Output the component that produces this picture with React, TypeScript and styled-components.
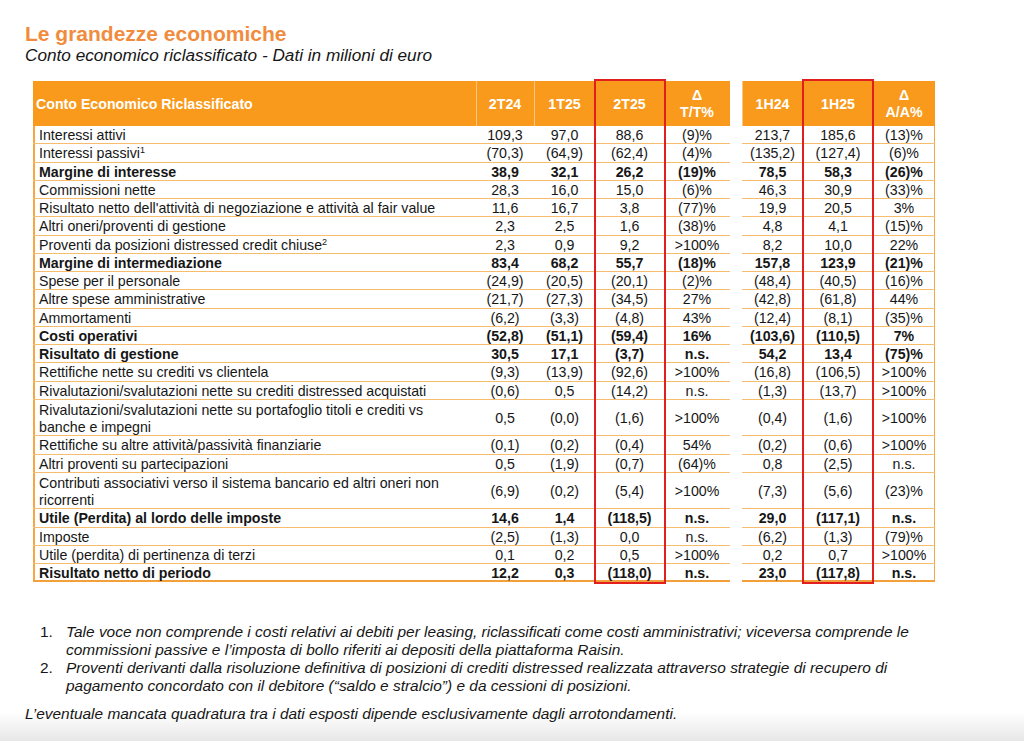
import React from "react";
import styled, { createGlobalStyle } from "styled-components";

const GlobalStyle = createGlobalStyle`
  html, body { margin: 0; padding: 0; }
  body {
    background: #fff;
    font-family: "Liberation Sans", Arial, sans-serif;
    color: #161616;
  }
`;

const ORANGE = "#f99a1c";
const LINE = "#f6bd6e";
const RED = "#e11f1f";

const Page = styled.div`
  width: 1024px;
  height: 741px;
  box-sizing: border-box;
  padding: 22px 0 0 25px;
  overflow: hidden;
  background: linear-gradient(to bottom, #fff 0, #fff 712px, #e7e7e7 741px);
`;

const Title = styled.h1`
  margin: 0;
  font-size: 21px;
  line-height: 24px;
  font-weight: 700;
  color: #f18b3e;
`;

const Subtitle = styled.h2`
  margin: 0;
  font-size: 17.2px;
  line-height: 18px;
  font-weight: 400;
  font-style: italic;
  color: #161616;
`;

const TableWrap = styled.div`
  position: relative;
  width: 902px;
  margin: 17px 0 0 8px;
`;

const Table = styled.table`
  border-collapse: separate;
  border-spacing: 0;
  table-layout: fixed;
  width: 902px;
  font-size: 14.2px;
`;

const HeadCell = styled.th<{ $first?: boolean; $gap?: boolean }>`
  height: 44px;
  padding: 1px 0 0 ${(p) => (p.$first ? "3px" : "0")};
  background: ${(p) => (p.$gap ? "#fff" : ORANGE)};
  color: #fff;
  font-weight: 700;
  font-size: 14.2px;
  line-height: 17px;
  text-align: ${(p) => (p.$first ? "left" : "center")};
  vertical-align: middle;
  box-shadow: ${(p) =>
    p.$first || p.$gap ? "none" : "inset 1px 0 0 rgba(255,255,255,0.45)"};
`;

const Row = styled.tr<{ $tall?: boolean }>`
  height: ${(p) => (p.$tall ? "36.5px" : "18.25px")};
`;

const Cell = styled.td<{
  $bold?: boolean;
  $label?: boolean;
  $gap?: boolean;
  $last?: boolean;
  $end?: boolean;
}>`
  padding: ${(p) => (p.$label ? "1px 0 0 6px" : "1px 0 0 0")};
  font-weight: ${(p) => (p.$bold ? 700 : 400)};
  line-height: 17px;
  text-align: ${(p) => (p.$label ? "left" : "center")};
  vertical-align: middle;
  white-space: nowrap;
  box-shadow: ${(p) => {
    if (p.$gap) return "none";
    const s: string[] = [
      p.$last ? `inset 0 -2px 0 #f4a03a` : `inset 0 -1px 0 ${LINE}`,
    ];
    if (p.$label) s.push(`inset 2px 0 0 #f6a645`);
    if (p.$end) s.push(`inset -1px 0 0 #f6a645`);
    return s.join(", ");
  }};
`;

const Sup = styled.sup`
  font-size: 9px;
  line-height: 0;
  vertical-align: 5px;
`;

const Highlight = styled.div<{ $left: number; $width: number }>`
  position: absolute;
  top: -2px;
  bottom: -2px;
  left: ${(p) => p.$left}px;
  width: ${(p) => p.$width}px;
  box-sizing: border-box;
  border: 2px solid ${RED};
  pointer-events: none;
`;

const Notes = styled.ol`
  list-style: none;
  margin: 41px 0 0 15px;
  padding: 0;
  font-size: 15.45px;
  line-height: 17.8px;
`;

const NoteItem = styled.li`
  display: grid;
  grid-template-columns: 26px 1fr;
`;

const NoteNum = styled.span`
  font-style: normal;
`;

const NoteText = styled.span`
  font-style: italic;
  white-space: nowrap;
`;

const Disclaimer = styled.p`
  margin: 10.5px 0 0 0;
  font-size: 15.45px;
  line-height: 17.8px;
  font-style: italic;
`;

type RowData = {
  label: React.ReactNode;
  v: string[];
  bold?: boolean;
  tall?: boolean;
};

const rows: RowData[] = [
  { label: "Interessi attivi", v: ["109,3", "97,0", "88,6", "(9)%", "213,7", "185,6", "(13)%"] },
  { label: <>Interessi passivi<Sup>1</Sup></>, v: ["(70,3)", "(64,9)", "(62,4)", "(4)%", "(135,2)", "(127,4)", "(6)%"] },
  { label: "Margine di interesse", bold: true, v: ["38,9", "32,1", "26,2", "(19)%", "78,5", "58,3", "(26)%"] },
  { label: "Commissioni nette", v: ["28,3", "16,0", "15,0", "(6)%", "46,3", "30,9", "(33)%"] },
  { label: "Risultato netto dell'attività di negoziazione e attività al fair value", v: ["11,6", "16,7", "3,8", "(77)%", "19,9", "20,5", "3%"] },
  { label: "Altri oneri/proventi di gestione", v: ["2,3", "2,5", "1,6", "(38)%", "4,8", "4,1", "(15)%"] },
  { label: <>Proventi da posizioni distressed credit chiuse<Sup>2</Sup></>, v: ["2,3", "0,9", "9,2", ">100%", "8,2", "10,0", "22%"] },
  { label: "Margine di intermediazione", bold: true, v: ["83,4", "68,2", "55,7", "(18)%", "157,8", "123,9", "(21)%"] },
  { label: "Spese per il personale", v: ["(24,9)", "(20,5)", "(20,1)", "(2)%", "(48,4)", "(40,5)", "(16)%"] },
  { label: "Altre spese amministrative", v: ["(21,7)", "(27,3)", "(34,5)", "27%", "(42,8)", "(61,8)", "44%"] },
  { label: "Ammortamenti", v: ["(6,2)", "(3,3)", "(4,8)", "43%", "(12,4)", "(8,1)", "(35)%"] },
  { label: "Costi operativi", bold: true, v: ["(52,8)", "(51,1)", "(59,4)", "16%", "(103,6)", "(110,5)", "7%"] },
  { label: "Risultato di gestione", bold: true, v: ["30,5", "17,1", "(3,7)", "n.s.", "54,2", "13,4", "(75)%"] },
  { label: "Rettifiche nette su crediti vs clientela", v: ["(9,3)", "(13,9)", "(92,6)", ">100%", "(16,8)", "(106,5)", ">100%"] },
  { label: "Rivalutazioni/svalutazioni nette su crediti distressed acquistati", v: ["(0,6)", "0,5", "(14,2)", "n.s.", "(1,3)", "(13,7)", ">100%"] },
  { label: <>Rivalutazioni/svalutazioni nette su portafoglio titoli e crediti vs<br />banche e impegni</>, tall: true, v: ["0,5", "(0,0)", "(1,6)", ">100%", "(0,4)", "(1,6)", ">100%"] },
  { label: "Rettifiche su altre attività/passività finanziarie", v: ["(0,1)", "(0,2)", "(0,4)", "54%", "(0,2)", "(0,6)", ">100%"] },
  { label: "Altri proventi su partecipazioni", v: ["0,5", "(1,9)", "(0,7)", "(64)%", "0,8", "(2,5)", "n.s."] },
  { label: <>Contributi associativi verso il sistema bancario ed altri oneri non<br />ricorrenti</>, tall: true, v: ["(6,9)", "(0,2)", "(5,4)", ">100%", "(7,3)", "(5,6)", "(23)%"] },
  { label: "Utile (Perdita) al lordo delle imposte", bold: true, v: ["14,6", "1,4", "(118,5)", "n.s.", "29,0", "(117,1)", "n.s."] },
  { label: "Imposte", v: ["(2,5)", "(1,3)", "0,0", "n.s.", "(6,2)", "(1,3)", "(79)%"] },
  { label: "Utile (perdita) di pertinenza di terzi", v: ["0,1", "0,2", "0,5", ">100%", "0,2", "0,7", ">100%"] },
  { label: "Risultato netto di periodo", bold: true, v: ["12,2", "0,3", "(118,0)", "n.s.", "23,0", "(117,8)", "n.s."] },
];

const colWidths = [443, 58, 61, 69, 66, 12, 61, 70, 62];

export default function App() {
  return (
    <Page>
      <GlobalStyle />
      <Title>Le grandezze economiche</Title>
      <Subtitle>Conto economico riclassificato - Dati in milioni di euro</Subtitle>

      <TableWrap>
        <Table>
          <colgroup>
            {colWidths.map((w, i) => (
              <col key={i} style={{ width: w }} />
            ))}
          </colgroup>
          <thead>
            <tr>
              <HeadCell $first>Conto Economico Riclassificato</HeadCell>
              <HeadCell>2T24</HeadCell>
              <HeadCell>1T25</HeadCell>
              <HeadCell>2T25</HeadCell>
              <HeadCell>
                Δ<br />T/T%
              </HeadCell>
              <HeadCell $gap />
              <HeadCell>1H24</HeadCell>
              <HeadCell>1H25</HeadCell>
              <HeadCell>
                Δ<br />A/A%
              </HeadCell>
            </tr>
          </thead>
          <tbody>
            {rows.map((r, i) => {
              const last = i === rows.length - 1;
              return (
                <Row key={i} $tall={r.tall}>
                  <Cell $label $bold={r.bold} $last={last}>
                    {r.label}
                  </Cell>
                  {r.v.slice(0, 4).map((x, j) => (
                    <Cell key={j} $bold={r.bold} $last={last}>
                      {x}
                    </Cell>
                  ))}
                  <Cell $gap />
                  {r.v.slice(4).map((x, j) => (
                    <Cell key={j} $bold={r.bold} $last={last} $end={j === 2}>
                      {x}
                    </Cell>
                  ))}
                </Row>
              );
            })}
          </tbody>
        </Table>
        <Highlight $left={561} $width={72} />
        <Highlight $left={769} $width={72} />
      </TableWrap>

      <Notes>
        <NoteItem>
          <NoteNum>1.</NoteNum>
          <NoteText>
            Tale voce non comprende i costi relativi ai debiti per leasing, riclassificati come costi amministrativi; viceversa comprende le
            <br />
            commissioni passive e l’imposta di bollo riferiti ai depositi della piattaforma Raisin.
          </NoteText>
        </NoteItem>
        <NoteItem>
          <NoteNum>2.</NoteNum>
          <NoteText>
            Proventi derivanti dalla risoluzione definitiva di posizioni di crediti distressed realizzata attraverso strategie di recupero di
            <br />
            pagamento concordato con il debitore (“saldo e stralcio”) e da cessioni di posizioni.
          </NoteText>
        </NoteItem>
      </Notes>
      <Disclaimer>
        L’eventuale mancata quadratura tra i dati esposti dipende esclusivamente dagli arrotondamenti.
      </Disclaimer>
    </Page>
  );
}
